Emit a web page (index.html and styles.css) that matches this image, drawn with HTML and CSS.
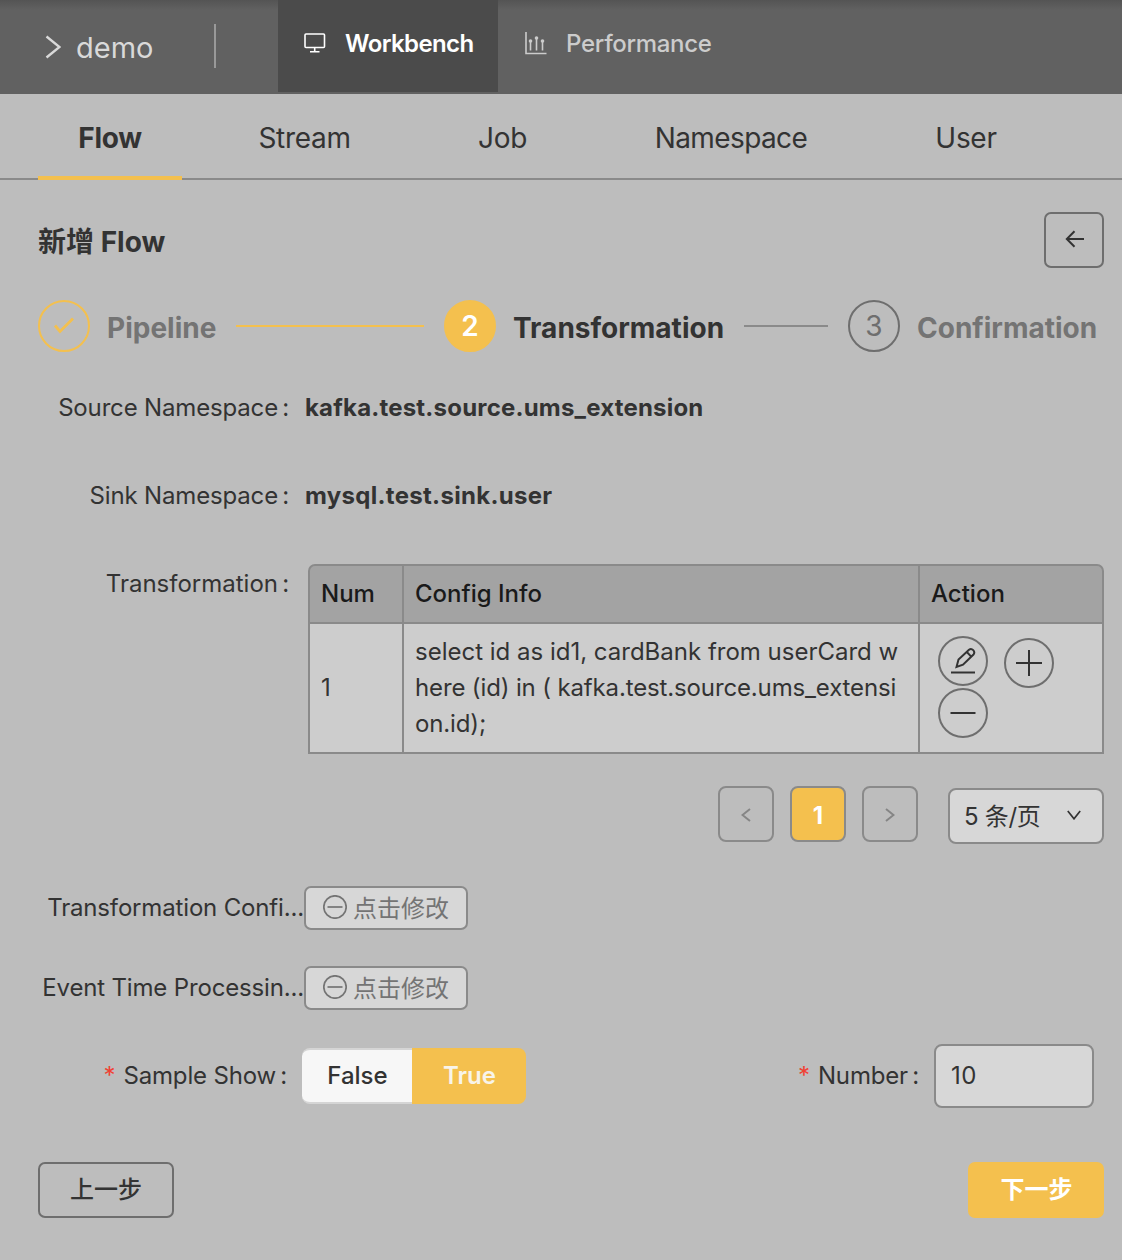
FILE: index.html
```html
<!DOCTYPE html>
<html lang="zh-CN">
<head>
<meta charset="utf-8">
<title>demo - Workbench</title>
<link rel="stylesheet" href="styles.css">
</head>
<body>
<header class="header">
  <a class="project">
    <svg class="project-arrow" width="16" height="24" viewBox="0 0 16 24"><path d="M1.5 1.5 14.5 12 1.5 22.5"/></svg>
    <span class="project-name">demo</span>
  </a>
  <span class="divider"></span>
  <a class="menu-item menu-active">
    <svg class="menu-icon" width="22" height="20" viewBox="0 0 22 20"><rect x="1" y="1" width="19.5" height="13.5" rx="1"/><path d="M10.7 14.5v4M6 18.7h9.5"/></svg>
    <span class="t-workbench">Workbench</span>
  </a>
  <a class="menu-item menu-performance">
    <svg class="menu-icon" width="22" height="23" viewBox="0 0 22 23"><path d="M1 0v21.5h20.5M5.5 9v9.5M11.5 6v12.5M17.5 9v9.5"/><g class="dots"><circle cx="5.5" cy="9" r="1.8"/><circle cx="11.5" cy="6" r="1.8"/><circle cx="17.5" cy="9" r="1.8"/></g></svg>
    <span class="t-performance">Performance</span>
  </a>
</header>
<nav class="tabs">
  <a class="tab tab-flow"><span>Flow</span></a>
  <a class="tab tab-stream"><span>Stream</span></a>
  <a class="tab tab-job"><span>Job</span></a>
  <a class="tab tab-namespace"><span>Namespace</span></a>
  <a class="tab tab-user"><span>User</span></a>
</nav>
<main class="page">
  <div class="title-row">
    <h1 class="title">新增 <span class="t-title">Flow</span></h1>
    <button class="back" aria-label="Back"><svg width="20" height="18" viewBox="0 0 20 18"><path d="M19 9H2M9.5 1.2 1.8 9l7.7 7.8"/></svg></button>
  </div>
  <div class="steps">
    <span class="step-icon step-done"><svg width="22" height="18" viewBox="0 0 22 18"><path d="M2 8.5 7 14.5 20 1.5"/></svg></span>
    <span class="step-title t-pipeline">Pipeline</span>
    <span class="step-line line-done"></span>
    <span class="step-icon step-current">2</span>
    <span class="step-title step-title-current t-transformation">Transformation</span>
    <span class="step-line line-wait"></span>
    <span class="step-icon step-wait">3</span>
    <span class="step-title t-confirmation">Confirmation</span>
  </div>
  <div class="form-row row-namespace">
    <div class="label"><span class="t-source">Source Namespace</span><i>:</i></div>
    <strong class="value t-kafka">kafka.test.source.ums_extension</strong>
  </div>
  <div class="form-row row-namespace">
    <div class="label"><span class="t-source">Sink Namespace</span><i>:</i></div>
    <strong class="value t-mysql">mysql.test.sink.user</strong>
  </div>
  <div class="form-row row-table">
    <div class="label"><span class="t-trans">Transformation</span><i>:</i></div>
    <div class="table">
      <div class="th"><span>Num</span></div>
      <div class="th"><span>Config Info</span></div>
      <div class="th"><span>Action</span></div>
      <div class="td">1</div>
      <div class="td sql"><span>select id as id1, cardBank from userCard w</span><span class="t-sql2">here (id) in ( kafka.test.source.ums_extensi</span><span class="t-sql2">on.id);</span></div>
      <div class="td actions">
        <button class="round" aria-label="Edit"><svg width="26" height="28" viewBox="0 0 26 28"><path d="M1 25.5h24"/><path d="M6.5 20 8.5 12.5 19 2.8Q21.2 1 23.2 3.2T23.5 7.5L13 17.7ZM16.8 5l4.4 4.6"/></svg></button>
        <button class="round round-add" aria-label="Add"><svg width="26" height="26" viewBox="0 0 26 26"><path d="M0 13h26M13 0v26"/></svg></button>
        <button class="round" aria-label="Remove"><svg width="26" height="26" viewBox="0 0 26 26"><path d="M0.5 13h25"/></svg></button>
      </div>
    </div>
  </div>
  <div class="pagination">
    <button class="page-btn" aria-label="Previous"><svg width="10" height="14" viewBox="0 0 10 14"><path d="M9 1 1.5 7 9 13"/></svg></button>
    <button class="page-btn page-current">1</button>
    <button class="page-btn" aria-label="Next"><svg width="10" height="14" viewBox="0 0 10 14"><path d="M1 1l7.5 6L1 13"/></svg></button>
    <div class="select"><span>5 条/页</span><svg width="14" height="10" viewBox="0 0 14 10"><path d="M.8 1 7 8.8 13.2 1"/></svg></div>
  </div>
  <div class="form-row row-modify">
    <div class="label label-cut"><span>Transformation Confi...</span></div>
    <button class="modify"><svg width="24" height="24" viewBox="0 0 24 24"><circle cx="12" cy="12" r="11.2"/><path d="M4.5 12h15"/></svg><span>点击修改</span></button>
  </div>
  <div class="form-row row-modify">
    <div class="label label-cut"><span>Event Time Processin...</span></div>
    <button class="modify"><svg width="24" height="24" viewBox="0 0 24 24"><circle cx="12" cy="12" r="11.2"/><path d="M4.5 12h15"/></svg><span>点击修改</span></button>
  </div>
  <div class="form-row row-sample">
    <div class="label label-sample"><b>*</b><span>Sample Show</span><i>:</i></div>
    <div class="toggle"><span class="toggle-off">False</span><span class="toggle-on">True</span></div>
    <div class="label label-number"><b>*</b><span>Number</span><i>:</i></div>
    <div class="input">10</div>
  </div>
  <footer class="footer">
    <button class="btn">上一步</button>
    <button class="btn btn-primary">下一步</button>
  </footer>
</main>
</body>
</html>
```
FILE: styles.css
```css
* { box-sizing: border-box; }
body {
  margin: 0;
  width: 1122px;
  height: 1260px;
  overflow: hidden;
  background: #bdbdbd;
  color: #333;
  font: 24px/36px Inter, "Noto Sans CJK SC", sans-serif;
}
button { font: inherit; color: inherit; padding: 0; background: none; display: flex; align-items: center; justify-content: center; }
svg { display: block; flex: none; fill: none; stroke: currentColor; stroke-width: 2; }
span, strong { white-space: nowrap; }

.header { display: flex; height: 94px; background: linear-gradient(#545454, #616161 10px); }
.project { display: flex; align-items: center; width: 214px; padding-left: 45px; color: #d9d9d9; }
.project-arrow { stroke-width: 2.4; }
.project-name { margin-left: 15px; padding-top: 2px; font-size: 29px; }
.divider { width: 2px; height: 44px; margin: 24px 62px 0 0; background: #999; }
.menu-item { display: flex; align-items: center; height: 92px; padding-bottom: 6px; font-weight: 500; color: #ccc; }
.menu-item span { padding-top: 2px; }
.menu-active { width: 220px; padding-left: 26px; background: #4b4b4b; color: #fff; font-weight: 600; }
.menu-icon { margin-right: 19px; stroke-width: 1.6; }
.menu-performance { padding-left: 27px; }
.t-workbench { letter-spacing: -0.6px; }
.t-performance { letter-spacing: -0.3px; }
.dots { fill: currentColor; stroke: none; }

.tabs { display: flex; gap: 48px; height: 86px; padding-left: 38px; border-bottom: 2px solid #8a8a8a; font-size: 28px; letter-spacing: -0.3px; }
.tab { display: flex; justify-content: center; height: 86px; padding-top: 26px; }
.tab-flow { width: 144px; margin-right: -11px; border-bottom: 4px solid #f4c04e; font-weight: 700; }
.tab-stream { width: 171px; }
.tab-job { width: 129px; }
.tab-namespace { width: 232px; letter-spacing: -0.6px; }
.tab-user { width: 142px; }

.page { padding: 32px 18px 0 38px; }
.title-row { display: flex; justify-content: space-between; height: 88px; }
.title { margin: 0; font-size: 28px; line-height: 60px; font-weight: 700; }
.back { width: 60px; height: 56px; padding: 0 0 2px 1px; border: 2px solid #6e6e6e; border-radius: 7px; }

.steps { display: flex; align-items: center; height: 52px; }
.step-icon { display: flex; align-items: center; justify-content: center; flex: none; width: 52px; height: 52px; border: 2px solid #6e6e6e; border-radius: 50%; font-size: 28px; color: #6e6e6e; }
.step-done { border-color: #f4c04e; color: #f4c04e; }
.step-done svg { stroke-width: 2.8; }
.step-current { background: #f4c04e; border-color: #f4c04e; color: #fff; font-weight: 600; }
.step-title { margin-left: 17px; padding-top: 4px; font-size: 28px; font-weight: 700; color: #747474; }
.t-pipeline { width: 129px; }
.t-transformation { width: 231px; }
.t-confirmation { width: 186px; }
.step-title-current { color: #333; }
.step-line { height: 2px; margin-right: 20px; background: #8a8a8a; flex: none; }
.line-done { width: 188px; background: #f4c04e; }
.line-wait { width: 84px; }

.form-row { display: flex; }
.row-namespace { height: 88px; }
.row-namespace:nth-of-type(3) { margin-top: 38px; }
.label { display: flex; justify-content: flex-end; flex: none; width: 251px; letter-spacing: -0.16px; }
.label i { width: 11px; font-style: normal; text-align: right; }
.label b { margin-right: 8px; font-weight: 400; color: #f04134; }
.label .t-trans { letter-spacing: 0; }
.value { margin-left: 16px; font-weight: 700; }
.t-kafka { letter-spacing: 0.2px; }
.t-mysql { letter-spacing: 0.3px; }
.row-table { height: 220px; }
.table { display: grid; grid-template: 60px 130px / 94px 516px 186px; margin: -2px 0 0 19px; height: 190px; border-radius: 8px 8px 0 0; }
.th, .td { display: flex; align-items: center; margin-right: -2px; border: 2px solid #8a8a8a; padding-left: 11px; }
.th:nth-child(3), .td:nth-child(6) { margin-right: 0; }
.th { background: #a3a3a3; color: #1a1a1a; font-weight: 500; }
.th:first-child { border-radius: 7px 0 0 0; }
.th:nth-child(3) { border-radius: 0 7px 0 0; }
.td { margin-top: -2px; background: #cdcdcd; }
.sql { flex-direction: column; align-items: flex-start; justify-content: center; }
.t-sql2 { letter-spacing: -0.14px; }
.actions { flex-wrap: wrap; align-content: flex-start; align-items: flex-start; column-gap: 16px; row-gap: 0; padding: 12px 40px 0 18px; }
.round { width: 50px; height: 50px; border: 2px solid #6e6e6e; border-radius: 50%; }
.round-add { margin-top: 2px; }

.pagination { display: flex; justify-content: flex-end; height: 100px; }
.page-btn { width: 56px; height: 56px; margin-right: 16px; padding-top: 2px; border: 2px solid #8a8a8a; border-radius: 8px; color: #858585; }
.page-current { padding-top: 3px; background: #f4c04e; color: #fff; font-weight: 700; }
.select { display: flex; align-items: center; justify-content: space-between; width: 156px; height: 56px; margin: 2px 0 0 14px; padding: 0 21px 2px 14px; border: 2px solid #8a8a8a; border-radius: 8px; background: #d7d7d7; }
.select span { padding-top: 3px; letter-spacing: -0.3px; }
.select svg { stroke-width: 1.7; }

.row-modify { height: 80px; }
.label-cut { width: 266px; padding-top: 4px; }
.modify { width: 164px; height: 44px; gap: 6px; border: 2px solid #8a8a8a; border-radius: 7px; background: #d7d7d7; color: #747474; }
.modify svg { stroke-width: 1.7; margin-bottom: 2px; }
.modify span { padding-top: 2px; }

.row-sample { height: 116px; align-items: flex-start; padding-top: 2px; }
.label-sample { width: 249px; padding-top: 10px; }
.toggle { display: flex; width: 224px; height: 56px; margin-left: 15px; line-height: 56px; }
.toggle-off { width: 110px; padding-left: 1px; border: solid #d5d5d5; border-width: 2px 0; border-radius: 8px 0 0 8px; background: #f7f7f7; line-height: 52px; text-align: center; font-weight: 500; }
.toggle-on { width: 114px; padding-left: 1px; border-radius: 0 8px 8px 0; background: #f4c04e; color: #f8f4ea; text-align: center; font-weight: 600; }
.label-number { width: 393px; padding-top: 10px; }
.input { width: 160px; height: 64px; margin: -4px 0 0 15px; padding-left: 15px; border: 2px solid #8a8a8a; border-radius: 8px; background: #d7d7d7; line-height: 60px; letter-spacing: 0.6px; }
.footer { display: flex; justify-content: space-between; }
.btn { width: 136px; height: 56px; border: 2px solid #6e6e6e; border-radius: 7px; font-weight: 500; }
.btn-primary { padding-left: 1px; border-color: #f4c04e; background: #f4c04e; color: #fff; font-weight: 700; }
```
